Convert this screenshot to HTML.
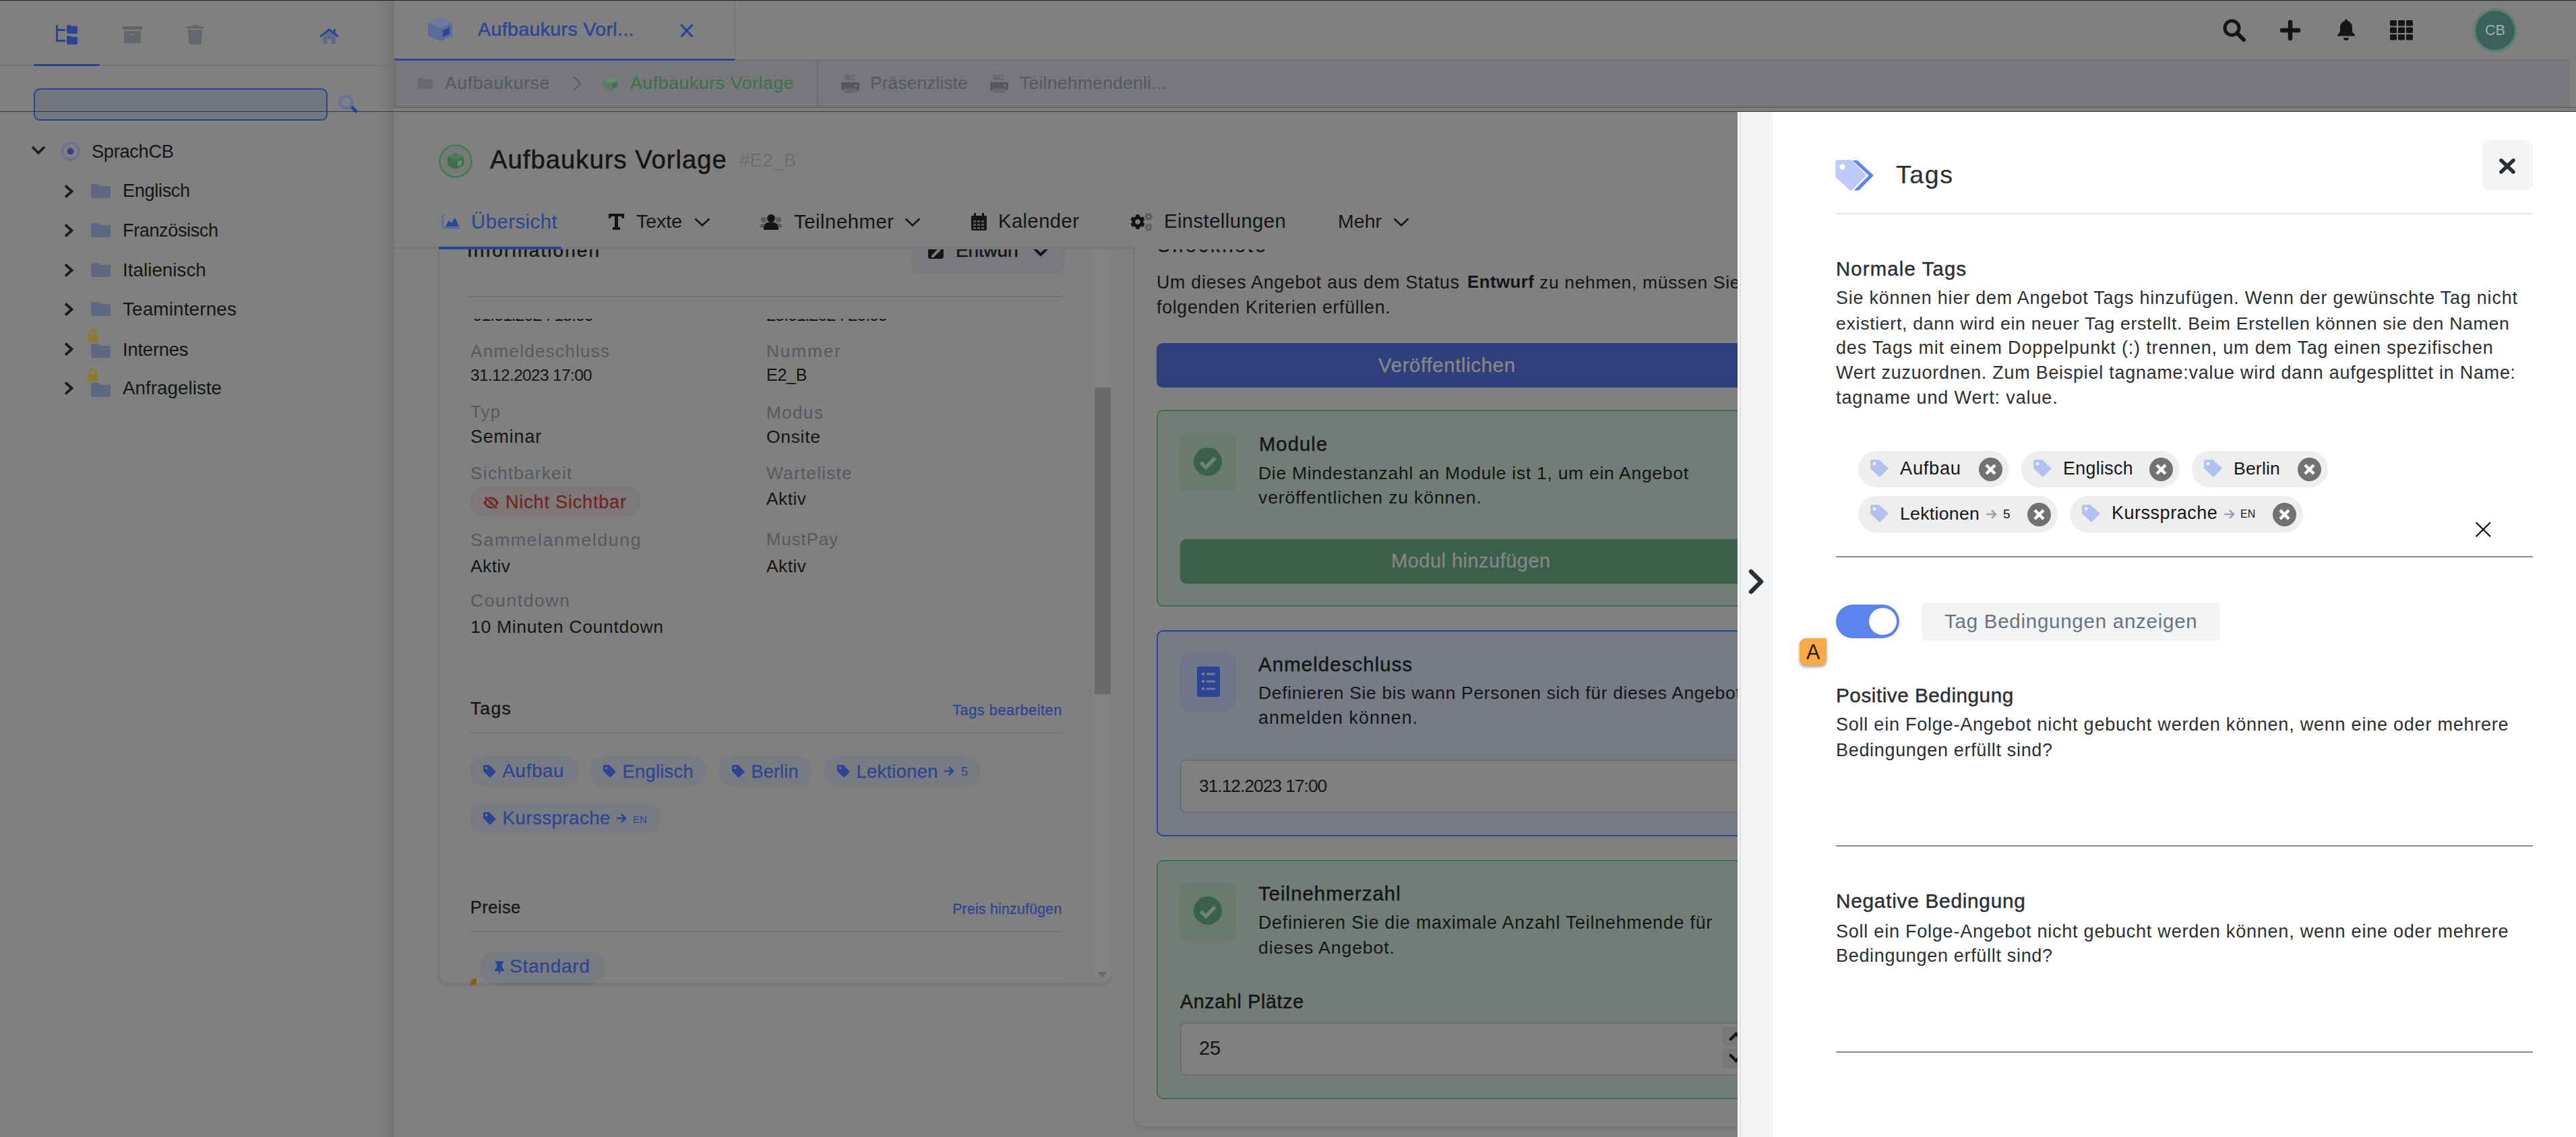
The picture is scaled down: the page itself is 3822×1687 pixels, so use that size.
<!DOCTYPE html><html><head><meta charset="utf-8"><style>
html,body{margin:0;padding:0;}
body{width:3822px;height:1687px;overflow:hidden;position:relative;background:#808080;font-family:"Liberation Sans",sans-serif;}
.a{position:absolute;}
.t{white-space:nowrap;line-height:1;}
svg{overflow:visible}
</style></head><body>
<div class="a" style="left:0px;top:0px;width:3822px;height:1px;background:#1e1e1e;"></div>
<div class="a" style="left:559px;top:1px;width:26px;height:1686px;background:linear-gradient(90deg,rgba(0,0,0,0),rgba(0,0,0,0.09))"></div>
<svg class="a" style="left:83px;top:36px;" width="33" height="31" viewBox="0 0 33 31"><rect x="0" y="1" width="3" height="25" rx="0.5" fill="#2d4494"/><rect x="0" y="7" width="14" height="3" fill="#2d4494"/><rect x="0" y="23" width="14" height="3" fill="#2d4494"/><path d="M16 3a2 2 0 0 1 2-2h3l1.5 1.5H30a2 2 0 0 1 2 2V12a2 2 0 0 1-2 2H18a2 2 0 0 1-2-2z" fill="#2d4494"/><path d="M16 19a2 2 0 0 1 2-2h3l1.5 1.5H30a2 2 0 0 1 2 2V28a2 2 0 0 1-2 2H18a2 2 0 0 1-2-2z" fill="#2d4494"/></svg>
<svg class="a" style="left:182px;top:39px;" width="29" height="25" viewBox="0 0 29 25"><rect x="0" y="0" width="29" height="5" rx="1" fill="#63666d"/><rect x="2" y="7" width="25" height="18" rx="1.5" fill="#63666d"/><rect x="11" y="11" width="7" height="1.8" fill="#7a7c80"/></svg>
<svg class="a" style="left:277px;top:37px;" width="25" height="30" viewBox="0 0 25 30"><rect x="0" y="2" width="25" height="3.5" fill="#63666d"/><path d="M8 2.5Q8 0 10.5 0h4Q17 0 17 2.5z" fill="#63666d"/><path d="M1.7 7.2h21.6l-1.7 18.8a3 3 0 0 1-3 3H6.4a3 3 0 0 1-3-3z" fill="#63666d"/></svg>
<svg class="a" style="left:474px;top:42px;" width="30" height="24" viewBox="0 0 30 24"><path d="M14.5 5L24 13v10H5.5V13z" fill="#5e6a8c"/><rect x="11.7" y="16.4" width="6" height="7" fill="#808080"/><path d="M1.2 12.4L14.4 2 27.6 12.4" stroke="#2d4494" stroke-width="3.2" fill="none"/><rect x="20.6" y="1.2" width="3.3" height="6" fill="#2d4494"/></svg>
<div class="a" style="left:0px;top:96px;width:581px;height:2px;background:#767676;"></div>
<div class="a" style="left:50px;top:95px;width:98px;height:3px;background:#2d4494;"></div>
<div class="a" style="left:50px;top:131px;width:436px;height:48px;background:#72767f;border:2px solid #2d4494;border-radius:9px;box-sizing:border-box"></div>
<svg class="a" style="left:500px;top:138px;" width="34" height="32" viewBox="0 0 34 32"><circle cx="13.4" cy="13.4" r="9" stroke="#66729c" stroke-width="4.5" fill="none"/><path d="M21.5 20.5l8 8" stroke="#2d4494" stroke-width="5"/></svg>
<svg class="a" style="left:46px;top:216px;" width="22" height="14" viewBox="0 0 22 14"><path d="M2 2l9 9 9-9" stroke="#1c1c1c" stroke-width="3.5" fill="none"/></svg>
<svg class="a" style="left:90px;top:210px;" width="29" height="29" viewBox="0 0 29 29"><circle cx="14.5" cy="14.5" r="12.5" stroke="#6d6f93" stroke-width="3.5" fill="none"/><circle cx="14.5" cy="14.5" r="5" fill="#3c3f88"/></svg>
<div class="a t" style="left:136.0px;top:210.8px;font-size:27.2px;color:#151515;letter-spacing:-0.29px;">SprachCB</div>
<svg class="a" style="left:95px;top:273.7px;" width="14" height="20" viewBox="0 0 14 20"><path d="M2 1.5l9.5 8.5-9.5 8.5" stroke="#1c1c1c" stroke-width="3.8" fill="none"/></svg>
<svg class="a" style="left:135px;top:272.7px;" width="29" height="21" viewBox="0 0 29 21"><path d="M0 3a3 3 0 0 1 3-3h8l3 3h12a3 3 0 0 1 3 3v12a3 3 0 0 1-3 3H3a3 3 0 0 1-3-3z" fill="#5f6882"/></svg>
<div class="a t" style="left:182.0px;top:270.1px;font-size:27.05px;color:#151515;letter-spacing:-0.30px;">Englisch</div>
<svg class="a" style="left:95px;top:332.3px;" width="14" height="20" viewBox="0 0 14 20"><path d="M2 1.5l9.5 8.5-9.5 8.5" stroke="#1c1c1c" stroke-width="3.8" fill="none"/></svg>
<svg class="a" style="left:135px;top:331.3px;" width="29" height="21" viewBox="0 0 29 21"><path d="M0 3a3 3 0 0 1 3-3h8l3 3h12a3 3 0 0 1 3 3v12a3 3 0 0 1-3 3H3a3 3 0 0 1-3-3z" fill="#5f6882"/></svg>
<div class="a t" style="left:182.0px;top:328.7px;font-size:26.99px;color:#151515;letter-spacing:-0.35px;">Französisch</div>
<svg class="a" style="left:95px;top:391.1px;" width="14" height="20" viewBox="0 0 14 20"><path d="M2 1.5l9.5 8.5-9.5 8.5" stroke="#1c1c1c" stroke-width="3.8" fill="none"/></svg>
<svg class="a" style="left:135px;top:390.1px;" width="29" height="21" viewBox="0 0 29 21"><path d="M0 3a3 3 0 0 1 3-3h8l3 3h12a3 3 0 0 1 3 3v12a3 3 0 0 1-3 3H3a3 3 0 0 1-3-3z" fill="#5f6882"/></svg>
<div class="a t" style="left:182.0px;top:387.1px;font-size:27.76px;color:#151515;letter-spacing:0.04px;">Italienisch</div>
<svg class="a" style="left:95px;top:449.1px;" width="14" height="20" viewBox="0 0 14 20"><path d="M2 1.5l9.5 8.5-9.5 8.5" stroke="#1c1c1c" stroke-width="3.8" fill="none"/></svg>
<svg class="a" style="left:135px;top:448.1px;" width="29" height="21" viewBox="0 0 29 21"><path d="M0 3a3 3 0 0 1 3-3h8l3 3h12a3 3 0 0 1 3 3v12a3 3 0 0 1-3 3H3a3 3 0 0 1-3-3z" fill="#5f6882"/></svg>
<div class="a t" style="left:182.0px;top:445.0px;font-size:27.89px;color:#151515;letter-spacing:0.14px;">Teaminternes</div>
<svg class="a" style="left:95px;top:508.29999999999995px;" width="14" height="20" viewBox="0 0 14 20"><path d="M2 1.5l9.5 8.5-9.5 8.5" stroke="#1c1c1c" stroke-width="3.8" fill="none"/></svg>
<svg class="a" style="left:135px;top:510.29999999999995px;" width="29" height="21" viewBox="0 0 29 21"><path d="M0 3a3 3 0 0 1 3-3h8l3 3h12a3 3 0 0 1 3 3v12a3 3 0 0 1-3 3H3a3 3 0 0 1-3-3z" fill="#5f6882"/></svg>
<svg class="a" style="left:129px;top:488.29999999999995px;" width="17" height="20" viewBox="0 0 17 20"><path d="M4 9V6a4.5 4.5 0 0 1 9 0v3" stroke="#8c7b2c" stroke-width="3" fill="none"/><rect x="1" y="9" width="15" height="11" rx="2" fill="#8c7b2c"/></svg>
<div class="a t" style="left:182.0px;top:504.5px;font-size:27.31px;color:#151515;letter-spacing:-0.16px;">Internes</div>
<svg class="a" style="left:95px;top:566.3px;" width="14" height="20" viewBox="0 0 14 20"><path d="M2 1.5l9.5 8.5-9.5 8.5" stroke="#1c1c1c" stroke-width="3.8" fill="none"/></svg>
<svg class="a" style="left:135px;top:568.3px;" width="29" height="21" viewBox="0 0 29 21"><path d="M0 3a3 3 0 0 1 3-3h8l3 3h12a3 3 0 0 1 3 3v12a3 3 0 0 1-3 3H3a3 3 0 0 1-3-3z" fill="#5f6882"/></svg>
<svg class="a" style="left:129px;top:546.3px;" width="17" height="20" viewBox="0 0 17 20"><path d="M4 9V6a4.5 4.5 0 0 1 9 0v3" stroke="#8c7b2c" stroke-width="3" fill="none"/><rect x="1" y="9" width="15" height="11" rx="2" fill="#8c7b2c"/></svg>
<div class="a t" style="left:182.0px;top:562.3px;font-size:27.73px;color:#151515;letter-spacing:0.06px;">Anfrageliste</div>
<div class="a" style="left:585px;top:88px;width:3227px;height:2px;background:#727272;"></div>
<div class="a" style="left:1090px;top:1px;width:1px;height:87px;background:#737373;"></div>
<div class="a" style="left:585px;top:87px;width:505px;height:4px;background:#2d4494;"></div>
<svg class="a" style="left:635px;top:26px;" width="36" height="35" viewBox="0 0 36 35"><path d="M18 0L36 8v19L18 35 0 27V8z" fill="#5b6a9c"/><path d="M18 0L36 8 18 16 0 8z" fill="#6e7aa3"/><path d="M22 19l10-4.5v10L22 29z" fill="#2d4494"/></svg>
<div class="a t" style="left:709.0px;top:29.1px;font-size:28.56px;color:#2d4494;letter-spacing:0.37px;-webkit-text-stroke:0.5px #2d4494">Aufbaukurs Vorl...</div>
<svg class="a" style="left:1009px;top:35px;" width="20" height="21" viewBox="0 0 20 21"><path d="M1.5 1.5l17 18M18.5 1.5l-17 18" stroke="#2d4494" stroke-width="3.2"/></svg>
<svg class="a" style="left:3298px;top:28px;" width="34" height="34" viewBox="0 0 34 34"><circle cx="13.5" cy="13.5" r="10.5" stroke="#151515" stroke-width="5" fill="none"/><path d="M21 21l10 10" stroke="#151515" stroke-width="6" stroke-linecap="round"/></svg>
<svg class="a" style="left:3383px;top:30px;" width="30" height="30" viewBox="0 0 30 30"><path d="M15 3v24M3 15h24" stroke="#151515" stroke-width="6.5" stroke-linecap="round"/></svg>
<svg class="a" style="left:3466px;top:28px;" width="30" height="34" viewBox="0 0 30 34"><path d="M15 3c-6 0-9 5-9 10v6l-4 5v1.5h26V24l-4-5v-6c0-5-3-10-9-10z" fill="#151515"/><circle cx="15" cy="2.5" r="2" fill="#151515"/><path d="M11 28a4 4 0 0 0 8 0z" fill="#151515"/></svg>
<svg class="a" style="left:3546px;top:30px;" width="34" height="30" viewBox="0 0 34 30"><rect x="0" y="0.0" width="10" height="8.5" rx="1.5" fill="#151515"/><rect x="12" y="0.0" width="10" height="8.5" rx="1.5" fill="#151515"/><rect x="24" y="0.0" width="10" height="8.5" rx="1.5" fill="#151515"/><rect x="0" y="10.5" width="10" height="8.5" rx="1.5" fill="#151515"/><rect x="12" y="10.5" width="10" height="8.5" rx="1.5" fill="#151515"/><rect x="24" y="10.5" width="10" height="8.5" rx="1.5" fill="#151515"/><rect x="0" y="21.0" width="10" height="8.5" rx="1.5" fill="#151515"/><rect x="12" y="21.0" width="10" height="8.5" rx="1.5" fill="#151515"/><rect x="24" y="21.0" width="10" height="8.5" rx="1.5" fill="#151515"/></svg>
<svg class="a" style="left:3669px;top:12px;" width="66" height="66" viewBox="0 0 66 66"><circle cx="33" cy="33" r="33" fill="#5f8076"/><circle cx="33" cy="33" r="29" fill="#3b6158"/></svg>
<div class="a t" style="left:3687.0px;top:33.6px;font-size:21.69px;color:#9db3ab;letter-spacing:-0.10px;">CB</div>
<div class="a" style="left:585px;top:90px;width:3227px;height:67px;background:#77787b;"></div>
<div class="a" style="left:585px;top:90px;width:2px;height:67px;background:#6f6f6f;"></div>
<div class="a" style="left:585px;top:157px;width:3227px;height:2px;background:#727272;"></div>
<div class="a" style="left:585px;top:159px;width:3237px;height:1px;background:#3e6b4c;"></div>
<div class="a" style="left:1212px;top:90px;width:2px;height:67px;background:#6c6c6c;"></div>
<svg class="a" style="left:620px;top:116px;" width="22" height="16" viewBox="0 0 22 16"><path d="M0 2a2 2 0 0 1 2-2h6l2 2h10a2 2 0 0 1 2 2v10a2 2 0 0 1-2 2H2a2 2 0 0 1-2-2z" fill="#67696e"/></svg>
<div class="a t" style="left:660.0px;top:110.4px;font-size:26.54px;color:#56585e;letter-spacing:0.62px;">Aufbaukurse</div>
<svg class="a" style="left:849px;top:113px;" width="14" height="22" viewBox="0 0 14 22"><path d="M2 1l10 10-10 10" stroke="#5a5c60" stroke-width="2" fill="none"/></svg>
<svg class="a" style="left:895px;top:113px;" width="22" height="22" viewBox="0 0 22 22"><path d="M11 0L22 5v12L11 22 0 17V5z" fill="#5f7a68"/><path d="M11 0L22 5 11 10 0 5z" fill="#6e8676"/><path d="M14 12l6-3v6l-6 3z" fill="#3e6b4c"/></svg>
<div class="a t" style="left:935.0px;top:110.3px;font-size:26.66px;color:#3d6e4c;letter-spacing:0.59px;">Aufbaukurs Vorlage</div>
<svg class="a" style="left:1248px;top:111px;" width="27" height="27" viewBox="0 0 27 27"><rect x="5" y="0" width="15" height="8" fill="#67696e"/><path d="M15 0l5 5h-5z" fill="#77787b"/><rect x="0" y="11" width="27" height="12" rx="2" fill="#56585e"/><rect x="4" y="20" width="19" height="7" rx="1.5" fill="#67696e"/><circle cx="22" cy="16" r="1.3" fill="#8a8b8e"/></svg>
<div class="a t" style="left:1291.0px;top:109.7px;font-size:26.37px;color:#56585e;letter-spacing:0.11px;">Präsenzliste</div>
<svg class="a" style="left:1469px;top:111px;" width="27" height="27" viewBox="0 0 27 27"><rect x="5" y="0" width="15" height="8" fill="#67696e"/><path d="M15 0l5 5h-5z" fill="#77787b"/><rect x="0" y="11" width="27" height="12" rx="2" fill="#56585e"/><rect x="4" y="20" width="19" height="7" rx="1.5" fill="#67696e"/><circle cx="22" cy="16" r="1.3" fill="#8a8b8e"/></svg>
<div class="a t" style="left:1513.0px;top:109.6px;font-size:26.58px;color:#56585e;letter-spacing:0.21px;">Teilnehmendenli...</div>
<div class="a" style="left:0px;top:165px;width:3822px;height:1px;background:#3a3a3a;"></div>
<svg class="a" style="left:651px;top:214px;" width="50" height="50" viewBox="0 0 50 50"><circle cx="25" cy="25" r="23.5" stroke="#3e7a52" stroke-width="2.5" fill="#757c78"/><path d="M25 13l12 5.5v13L25 37 13 31.5v-13z" fill="#3f6e4f"/><path d="M25 13l12 5.5-12 5.5-12-5.5z" fill="#4a7a5a"/><path d="M28 26l6-3v7l-6 3z" fill="#6f8a78"/></svg>
<div class="a t" style="left:727.0px;top:218.2px;font-size:38.3px;color:#151515;letter-spacing:0.98px;-webkit-text-stroke:0.5px #151515">Aufbaukurs Vorlage</div>
<div class="a t" style="left:1097.0px;top:225.3px;font-size:26.72px;color:#6b6e75;letter-spacing:0.95px;">#E2_B</div>
<svg class="a" style="left:655px;top:319px;" width="28" height="21" viewBox="0 0 28 21"><path d="M2 0v19h26" stroke="#5d6c9c" stroke-width="3" fill="none"/><path d="M6 17l5-9 4 4 5-8 6 13z" fill="#2d4494"/></svg>
<div class="a t" style="left:699.0px;top:314.0px;font-size:29.35px;color:#2d4494;letter-spacing:0.47px;">Übersicht</div>
<svg class="a" style="left:903px;top:317px;" width="23" height="24" viewBox="0 0 23 24"><path d="M0 0h23v7h-3l-1-3h-5v16h3v4H6v-4h3V4H4L3 7H0z" fill="#151515"/></svg>
<div class="a t" style="left:944.0px;top:314.4px;font-size:28.43px;color:#151515;letter-spacing:0.02px;">Texte</div>
<svg class="a" style="left:1030px;top:323px;" width="24" height="13" viewBox="0 0 24 13"><path d="M1.5 1.5l10.5 10 10.5-10" stroke="#151515" stroke-width="2.5" fill="none"/></svg>
<svg class="a" style="left:1127px;top:318px;" width="34" height="23" viewBox="0 0 34 23"><circle cx="17" cy="6" r="6" fill="#151515"/><path d="M6 23v-4a7 7 0 0 1 7-7h8a7 7 0 0 1 7 7v4z" fill="#151515"/><circle cx="6" cy="8" r="4" fill="#5a5a5a"/><circle cx="28" cy="8" r="4" fill="#5a5a5a"/><path d="M0 19a5 5 0 0 1 5-5h3l-2 6z" fill="#5a5a5a"/><path d="M34 19a5 5 0 0 0-5-5h-3l2 6z" fill="#5a5a5a"/></svg>
<div class="a t" style="left:1178.0px;top:314.0px;font-size:29.33px;color:#151515;letter-spacing:0.52px;">Teilnehmer</div>
<svg class="a" style="left:1342px;top:323px;" width="24" height="13" viewBox="0 0 24 13"><path d="M1.5 1.5l10.5 10 10.5-10" stroke="#151515" stroke-width="2.5" fill="none"/></svg>
<svg class="a" style="left:1441px;top:316px;" width="23" height="26" viewBox="0 0 23 26"><rect x="0" y="4" width="23" height="22" rx="2" fill="#151515"/><rect x="4" y="0" width="3" height="6" fill="#151515"/><rect x="16" y="0" width="3" height="6" fill="#151515"/><rect x="3" y="11" width="4" height="3" fill="#5a5a5a"/><rect x="3" y="16" width="4" height="3" fill="#5a5a5a"/><rect x="3" y="21" width="4" height="3" fill="#5a5a5a"/><rect x="9" y="11" width="4" height="3" fill="#5a5a5a"/><rect x="9" y="16" width="4" height="3" fill="#5a5a5a"/><rect x="9" y="21" width="4" height="3" fill="#5a5a5a"/><rect x="15" y="11" width="4" height="3" fill="#5a5a5a"/><rect x="15" y="16" width="4" height="3" fill="#5a5a5a"/><rect x="15" y="21" width="4" height="3" fill="#5a5a5a"/></svg>
<div class="a t" style="left:1481.0px;top:314.0px;font-size:29.18px;color:#151515;letter-spacing:0.44px;">Kalender</div>
<svg class="a" style="left:1670px;top:305px;" width="50" height="45" viewBox="0 0 50 45"><circle cx="18" cy="24.1" r="8.6" fill="#151515"/><rect x="15.2" y="13.3" width="5.6" height="21.6" rx="0.8" fill="#151515" transform="rotate(0 18 24.1)"/><rect x="15.2" y="13.3" width="5.6" height="21.6" rx="0.8" fill="#151515" transform="rotate(60 18 24.1)"/><rect x="15.2" y="13.3" width="5.6" height="21.6" rx="0.8" fill="#151515" transform="rotate(120 18 24.1)"/><circle cx="18" cy="24.1" r="3.7" fill="#808080"/><circle cx="34.2" cy="16.4" r="4.3" fill="#5a5c5c"/><rect x="32.6" y="10.799999999999999" width="3.2" height="11.2" rx="0.8" fill="#5a5c5c" transform="rotate(30 34.2 16.4)"/><rect x="32.6" y="10.799999999999999" width="3.2" height="11.2" rx="0.8" fill="#5a5c5c" transform="rotate(90 34.2 16.4)"/><rect x="32.6" y="10.799999999999999" width="3.2" height="11.2" rx="0.8" fill="#5a5c5c" transform="rotate(150 34.2 16.4)"/><circle cx="34.2" cy="16.4" r="1.9" fill="#808080"/><circle cx="34.2" cy="32.1" r="4.3" fill="#5a5c5c"/><rect x="32.6" y="26.5" width="3.2" height="11.2" rx="0.8" fill="#5a5c5c" transform="rotate(30 34.2 32.1)"/><rect x="32.6" y="26.5" width="3.2" height="11.2" rx="0.8" fill="#5a5c5c" transform="rotate(90 34.2 32.1)"/><rect x="32.6" y="26.5" width="3.2" height="11.2" rx="0.8" fill="#5a5c5c" transform="rotate(150 34.2 32.1)"/><circle cx="34.2" cy="32.1" r="1.9" fill="#808080"/></svg>
<div class="a t" style="left:1727.0px;top:314.0px;font-size:29.27px;color:#151515;letter-spacing:0.42px;">Einstellungen</div>
<div class="a t" style="left:1985.0px;top:314.4px;font-size:28.45px;color:#151515;letter-spacing:0.10px;">Mehr</div>
<svg class="a" style="left:2067px;top:323px;" width="24" height="13" viewBox="0 0 24 13"><path d="M1.5 1.5l10.5 10 10.5-10" stroke="#151515" stroke-width="2.5" fill="none"/></svg>
<div class="a" style="left:650px;top:366px;width:999px;height:1095px;background:#808080;border:2px solid #777;border-top:none;border-radius:0 0 15px 15px;box-sizing:border-box;box-shadow:0 2px 4px rgba(0,0,0,0.08)"></div>
<div class="a" style="left:1622px;top:372px;width:27px;height:1074px;background:#838383;"></div>
<div class="a" style="left:1624px;top:575px;width:24px;height:455px;background:#6a6a6a;"></div>
<svg class="a" style="left:1628px;top:1442px;" width="15" height="8" viewBox="0 0 15 8"><path d="M0 0h15L7.5 8z" fill="#6a6a6a"/></svg>
<div class="a" style="left:650px;top:370px;width:999px;height:97px;overflow:hidden">
<div class="a t" style="left:43.0px;top:-11.7px;font-size:28px;color:#151515;letter-spacing:2.07px;-webkit-text-stroke:0.5px #151515">Informationen</div>
<div class="a" style="left:702px;top:-40px;width:228px;height:76px;background:#797a7d;border-radius:12px"></div>
<svg class="a" style="left:727px;top:-2px;" width="23" height="17" viewBox="0 0 23 17"><path d="M0 -6h23v18a4 4 0 0 1-4 4H4a4 4 0 0 1-4-4z" fill="#151515"/><path d="M5 11l11-11 3 3-11 11H5z" fill="#797a7d"/></svg>
<div class="a t" style="left:768.0px;top:-11.7px;font-size:28px;color:#151515;letter-spacing:-0.17px;-webkit-text-stroke:0.5px #151515">Entwurf</div>
<svg class="a" style="left:883px;top:0px;" width="22" height="11" viewBox="0 0 22 11"><path d="M2 -1l9 9 9-9" stroke="#151515" stroke-width="4" fill="none"/></svg>
<div class="a" style="left:43px;top:69px;width:887px;height:2px;background:#737373;"></div>
</div>
<div class="a" style="left:650px;top:473px;width:999px;height:8px;overflow:hidden">
<div class="a t" style="left:51.0px;top:-19.5px;font-size:26px;color:#151515;letter-spacing:-1.49px;">01.01.2024 15:00</div>
<div class="a t" style="left:487.0px;top:-19.5px;font-size:26px;color:#151515;letter-spacing:-1.49px;">25.01.2024 20:00</div>
</div>
<div class="a" style="left:585px;top:366px;width:1993px;height:4px;background:#7a7a7a;"></div>
<div class="a" style="left:651px;top:366px;width:182px;height:4px;background:#2d4494;"></div>
<div class="a t" style="left:698.0px;top:508.1px;font-size:26.12px;color:#56595f;letter-spacing:1.23px;">Anmeldeschluss</div>
<div class="a t" style="left:1137.0px;top:508.0px;font-size:26.33px;color:#56595f;letter-spacing:1.84px;">Nummer</div>
<div class="a t" style="left:698.0px;top:544.5px;font-size:24.36px;color:#151515;letter-spacing:-0.60px;">31.12.2023 17:00</div>
<div class="a t" style="left:1137.0px;top:544.1px;font-size:25.11px;color:#151515;letter-spacing:-0.30px;">E2_B</div>
<div class="a t" style="left:698.0px;top:598.7px;font-size:25.62px;color:#56595f;letter-spacing:1.35px;">Typ</div>
<div class="a t" style="left:1137.0px;top:598.6px;font-size:25.98px;color:#56595f;letter-spacing:1.50px;">Modus</div>
<div class="a t" style="left:698.0px;top:635.2px;font-size:26.83px;color:#151515;letter-spacing:0.87px;">Seminar</div>
<div class="a t" style="left:1137.0px;top:635.4px;font-size:26.58px;color:#151515;letter-spacing:0.62px;">Onsite</div>
<div class="a t" style="left:698.0px;top:689.0px;font-size:26.33px;color:#56595f;letter-spacing:1.15px;">Sichtbarkeit</div>
<div class="a t" style="left:1137.0px;top:689.0px;font-size:26.33px;color:#56595f;letter-spacing:1.18px;">Warteliste</div>
<div class="a" style="left:697px;top:722px;width:254px;height:45px;background:#7e7979;border-radius:23px"></div>
<svg class="a" style="left:717px;top:737px;" width="23" height="18" viewBox="0 0 23 18"><path d="M2 9c3-5 6-7 9.5-7s6.5 2 9.5 7c-3 5-6 7-9.5 7S5 14 2 9z" stroke="#742323" stroke-width="3" fill="none"/><circle cx="11.5" cy="9" r="3.5" fill="#742323"/><path d="M3 1l17 16" stroke="#7e7979" stroke-width="5"/><path d="M3 1l17 16" stroke="#742323" stroke-width="2.8"/></svg>
<div class="a t" style="left:750.0px;top:731.1px;font-size:27.12px;color:#742323;letter-spacing:0.79px;-webkit-text-stroke:0.3px #742323">Nicht Sichtbar</div>
<div class="a t" style="left:1137.0px;top:726.5px;font-size:26.36px;color:#151515;letter-spacing:0.45px;">Aktiv</div>
<div class="a t" style="left:698.0px;top:787.8px;font-size:26.66px;color:#56595f;letter-spacing:1.64px;">Sammelanmeldung</div>
<div class="a t" style="left:1137.0px;top:788.3px;font-size:25.6px;color:#56595f;letter-spacing:1.07px;">MustPay</div>
<div class="a t" style="left:698.0px;top:826.5px;font-size:26.36px;color:#151515;letter-spacing:0.45px;">Aktiv</div>
<div class="a t" style="left:1137.0px;top:826.5px;font-size:26.36px;color:#151515;letter-spacing:0.45px;">Aktiv</div>
<div class="a t" style="left:698.0px;top:877.9px;font-size:26.51px;color:#56595f;letter-spacing:1.61px;">Countdown</div>
<div class="a t" style="left:698.0px;top:917.3px;font-size:26.64px;color:#151515;letter-spacing:0.65px;">10 Minuten Countdown</div>
<div class="a t" style="left:697.8px;top:1038.0px;font-size:26.6px;color:#151515;letter-spacing:1.27px;-webkit-text-stroke:0.3px #151515">Tags</div>
<div class="a t" style="left:1413.2px;top:1042.9px;font-size:21.72px;color:#2d4494;letter-spacing:0.54px;-webkit-text-stroke:0.3px #2d4494">Tags bearbeiten</div>
<div class="a" style="left:697px;top:1086px;width:879px;height:2px;background:#737373;"></div>
<div class="a" style="left:697px;top:1122px;width:162px;height:45px;background:#787b82;border-radius:23px"></div>
<svg class="a" style="left:717px;top:1135px;" width="19" height="19" viewBox="0 0 19 19"><path d="M0 1.5A1.5 1.5 0 0 1 1.5 0H9l10 10-9 9L0 9z" fill="#2d4494"/><circle cx="4.5" cy="4.5" r="1.8" fill="#787b82"/></svg>
<div class="a t" style="left:745.5px;top:1130.2px;font-size:27.79px;color:#2d4494;letter-spacing:0.58px;-webkit-text-stroke:0.25px #2d4494">Aufbau</div>
<div class="a" style="left:875px;top:1122px;width:173px;height:45px;background:#787b82;border-radius:23px"></div>
<svg class="a" style="left:895px;top:1135px;" width="19" height="19" viewBox="0 0 19 19"><path d="M0 1.5A1.5 1.5 0 0 1 1.5 0H9l10 10-9 9L0 9z" fill="#2d4494"/><circle cx="4.5" cy="4.5" r="1.8" fill="#787b82"/></svg>
<div class="a t" style="left:923.5px;top:1130.5px;font-size:27.33px;color:#2d4494;letter-spacing:0.26px;-webkit-text-stroke:0.25px #2d4494">Englisch</div>
<div class="a" style="left:1066px;top:1122px;width:139px;height:45px;background:#787b82;border-radius:23px"></div>
<svg class="a" style="left:1086px;top:1135px;" width="19" height="19" viewBox="0 0 19 19"><path d="M0 1.5A1.5 1.5 0 0 1 1.5 0H9l10 10-9 9L0 9z" fill="#2d4494"/><circle cx="4.5" cy="4.5" r="1.8" fill="#787b82"/></svg>
<div class="a t" style="left:1114.5px;top:1130.6px;font-size:27.12px;color:#2d4494;letter-spacing:0.14px;-webkit-text-stroke:0.25px #2d4494">Berlin</div>
<div class="a" style="left:1222px;top:1122px;width:233px;height:45px;background:#787b82;border-radius:23px"></div>
<svg class="a" style="left:1242px;top:1135px;" width="19" height="19" viewBox="0 0 19 19"><path d="M0 1.5A1.5 1.5 0 0 1 1.5 0H9l10 10-9 9L0 9z" fill="#2d4494"/><circle cx="4.5" cy="4.5" r="1.8" fill="#787b82"/></svg>
<div class="a t" style="left:1270.5px;top:1130.5px;font-size:27.38px;color:#2d4494;letter-spacing:0.28px;-webkit-text-stroke:0.25px #2d4494">Lektionen</div>
<svg class="a" style="left:1400px;top:1136px;" width="16" height="16" viewBox="0 0 16 16"><path d="M1 8h13M8 2l6 6-6 6" stroke="#2d4494" stroke-width="2.6" fill="none"/></svg>
<div class="a t" style="left:1426.0px;top:1136.1px;font-size:18.17px;color:#2d4494;letter-spacing:0.00px;">5</div>
<div class="a" style="left:697px;top:1192px;width:284px;height:45px;background:#787b82;border-radius:23px"></div>
<svg class="a" style="left:717px;top:1205px;" width="19" height="19" viewBox="0 0 19 19"><path d="M0 1.5A1.5 1.5 0 0 1 1.5 0H9l10 10-9 9L0 9z" fill="#2d4494"/><circle cx="4.5" cy="4.5" r="1.8" fill="#787b82"/></svg>
<div class="a t" style="left:745.5px;top:1200.3px;font-size:27.69px;color:#2d4494;letter-spacing:0.45px;-webkit-text-stroke:0.25px #2d4494">Kurssprache</div>
<svg class="a" style="left:914px;top:1206px;" width="16" height="16" viewBox="0 0 16 16"><path d="M1 8h13M8 2l6 6-6 6" stroke="#2d4494" stroke-width="2.6" fill="none"/></svg>
<div class="a t" style="left:939.0px;top:1207.7px;font-size:15px;color:#2d4494;letter-spacing:0.00px;">EN</div>
<div class="a t" style="left:697.8px;top:1333.5px;font-size:25.5px;color:#151515;letter-spacing:0.44px;-webkit-text-stroke:0.3px #151515">Preise</div>
<div class="a t" style="left:1413.2px;top:1338.1px;font-size:21.21px;color:#2d4494;letter-spacing:0.27px;-webkit-text-stroke:0.3px #2d4494">Preis hinzufügen</div>
<div class="a" style="left:697px;top:1381px;width:879px;height:2px;background:#737373;"></div>
<div class="a" style="left:706px;top:1451px;width:870px;height:2px;background:#868686;"></div>
<div class="a" style="left:713px;top:1413px;width:184px;height:46px;background:#787b82;border-radius:23px;box-shadow:0 1px 3px rgba(0,0,0,0.12)"></div>
<svg class="a" style="left:733px;top:1426px;" width="16" height="19" viewBox="0 0 16 19"><path d="M2 0h12v2l-2 2v5l3 4v2H9v4H7v-4H1v-2l3-4V4L2 2z" fill="#2d4494"/></svg>
<div class="a t" style="left:756.0px;top:1420.1px;font-size:28.1px;color:#2d4494;letter-spacing:0.71px;-webkit-text-stroke:0.25px #2d4494">Standard</div>
<div class="a" style="left:697px;top:1451px;width:10px;height:10px;overflow:hidden"><div style="width:20px;height:20px;border-radius:10px;background:#7d661c"></div></div>
<div class="a" style="left:1682px;top:366px;width:1000px;height:1307px;background:#808080;border:2px solid #777;border-top:none;border-radius:0 0 15px 15px;box-sizing:border-box;box-shadow:0 2px 4px rgba(0,0,0,0.08)"></div>
<div class="a" style="left:1682px;top:370px;width:300px;height:10px;overflow:hidden">
<div class="a t" style="left:34.0px;top:-18.7px;font-size:28px;color:#151515;letter-spacing:3.64px;-webkit-text-stroke:0.5px #151515">Checkliste</div>
</div>
<div class="a t" style="left:1716.0px;top:405.9px;font-size:26.75px;color:#151515;letter-spacing:0.77px;">Um dieses Angebot aus dem Status</div>
<div class="a t" style="left:2177.0px;top:406.3px;font-size:25.87px;color:#151515;letter-spacing:0.42px;font-weight:700;">Entwurf</div>
<div class="a t" style="left:2284.0px;top:406.0px;font-size:26.44px;color:#151515;letter-spacing:0.69px;">zu nehmen, müssen Sie</div>
<div class="a t" style="left:1716.0px;top:443.4px;font-size:26.78px;color:#151515;letter-spacing:0.69px;">folgenden Kriterien erfüllen.</div>
<div class="a" style="left:1716px;top:509px;width:900px;height:66px;background:#2f3f7b;border-radius:9px"></div>
<div class="a t" style="left:2045.0px;top:526.7px;font-size:29.34px;color:#888888;letter-spacing:0.69px;-webkit-text-stroke:0.3px #888888">Veröffentlichen</div>
<div class="a" style="left:1716px;top:608px;width:900px;height:292px;background:#727d78;border:2px solid #3b6e4c;border-radius:10px;box-sizing:border-box"></div>
<div class="a" style="left:1751px;top:644px;width:83px;height:85px;background:#6a7a71;border-radius:10px"></div>
<svg class="a" style="left:1771px;top:664px;" width="42" height="42" viewBox="0 0 42 42"><circle cx="21" cy="21" r="21" fill="#3a5f4a"/><path d="M10.5 22l7.5 7.5 14-14" stroke="#6f8277" stroke-width="5.5" fill="none"/></svg>
<div class="a t" style="left:1868.0px;top:644.8px;font-size:29.12px;color:#151515;letter-spacing:1.12px;-webkit-text-stroke:0.45px #151515">Module</div>
<div class="a t" style="left:1867.0px;top:688.6px;font-size:26.5px;color:#151515;letter-spacing:0.71px;">Die Mindestanzahl an Module ist 1, um ein Angebot</div>
<div class="a t" style="left:1867.0px;top:725.1px;font-size:26.7px;color:#151515;letter-spacing:0.79px;">veröffentlichen zu können.</div>
<div class="a" style="left:1751px;top:800px;width:860px;height:66px;background:#3a5f4a;border-radius:9px"></div>
<div class="a t" style="left:2064.0px;top:817.6px;font-size:29.14px;color:#868686;letter-spacing:0.42px;-webkit-text-stroke:0.3px #868686">Modul hinzufügen</div>
<div class="a" style="left:1716px;top:935px;width:900px;height:306px;background:#777b85;border:2px solid #2d4494;border-radius:10px;box-sizing:border-box"></div>
<div class="a" style="left:1751px;top:969px;width:83px;height:86px;background:#70768a;border-radius:10px"></div>
<svg class="a" style="left:1776px;top:989px;" width="34" height="45" viewBox="0 0 34 45"><rect x="0" y="0" width="34" height="45" rx="3" fill="#2d4494"/><circle cx="9" cy="11" r="2.3" fill="#777b8a"/><rect x="14" y="9.5" width="13" height="3" rx="1" fill="#777b8a"/><circle cx="9" cy="22" r="2.3" fill="#777b8a"/><rect x="14" y="20.5" width="13" height="3" rx="1" fill="#777b8a"/><circle cx="9" cy="33" r="2.3" fill="#777b8a"/><rect x="14" y="31.5" width="13" height="3" rx="1" fill="#777b8a"/></svg>
<div class="a t" style="left:1867.0px;top:971.0px;font-size:29.33px;color:#151515;letter-spacing:1.13px;-webkit-text-stroke:0.45px #151515">Anmeldeschluss</div>
<div class="a t" style="left:1867.0px;top:1015.1px;font-size:26.46px;color:#151515;letter-spacing:0.66px;">Definieren Sie bis wann Personen sich für dieses Angebot</div>
<div class="a t" style="left:1867.0px;top:1051.6px;font-size:26.84px;color:#151515;letter-spacing:1.03px;">anmelden können.</div>
<div class="a" style="left:1751px;top:1127px;width:860px;height:79px;background:#808080;border:2px solid #6e6e6e;border-radius:8px;box-sizing:border-box"></div>
<div class="a t" style="left:1779.0px;top:1152.8px;font-size:26.35px;color:#151515;letter-spacing:-0.99px;">31.12.2023 17:00</div>
<div class="a" style="left:1716px;top:1276px;width:900px;height:355px;background:#727d78;border:2px solid #3b6e4c;border-radius:10px;box-sizing:border-box"></div>
<div class="a" style="left:1751px;top:1310px;width:83px;height:85px;background:#6a7a71;border-radius:10px"></div>
<svg class="a" style="left:1771px;top:1330px;" width="42" height="42" viewBox="0 0 42 42"><circle cx="21" cy="21" r="21" fill="#3a5f4a"/><path d="M10.5 22l7.5 7.5 14-14" stroke="#6f8277" stroke-width="5.5" fill="none"/></svg>
<div class="a t" style="left:1867.0px;top:1311.0px;font-size:29.36px;color:#151515;letter-spacing:1.02px;-webkit-text-stroke:0.45px #151515">Teilnehmerzahl</div>
<div class="a t" style="left:1867.0px;top:1355.8px;font-size:26.72px;color:#151515;letter-spacing:0.82px;">Definieren Sie die maximale Anzahl Teilnehmende für</div>
<div class="a t" style="left:1867.0px;top:1392.6px;font-size:26.69px;color:#151515;letter-spacing:0.86px;">dieses Angebot.</div>
<div class="a t" style="left:1751.0px;top:1471.7px;font-size:28.64px;color:#151515;letter-spacing:0.67px;-webkit-text-stroke:0.45px #151515">Anzahl Plätze</div>
<div class="a" style="left:1751px;top:1517px;width:860px;height:79px;background:#808080;border:2px solid #6e6e6e;border-radius:8px;box-sizing:border-box"></div>
<div class="a t" style="left:1779.0px;top:1540.6px;font-size:28.92px;color:#151515;letter-spacing:0.00px;">25</div>
<div class="a" style="left:2555px;top:1524px;width:30px;height:28px;background:#787878;border-radius:7px"></div>
<div class="a" style="left:2555px;top:1556px;width:30px;height:29px;background:#787878;border-radius:7px"></div>
<svg class="a" style="left:2560px;top:1525px;" width="30" height="60" viewBox="0 0 30 60"><path d="M7.6 17l8.2-8.1 8.2 8.1M7.6 40.8l8.2 8.2 8.2-8.2" stroke="#151515" stroke-width="4.2" fill="none" stroke-linecap="round"/></svg>
<div class="a" style="left:2578px;top:166px;width:1244px;height:1521px;background:#ffffff;"></div>
<div class="a" style="left:2578px;top:166px;width:3px;height:1521px;background:#f8f9fb;"></div>
<div class="a" style="left:2581px;top:166px;width:2px;height:1521px;background:#dedede;"></div>
<div class="a" style="left:2583px;top:166px;width:47px;height:1521px;background:#f3f4f6;"></div>
<svg class="a" style="left:2594px;top:844px;" width="24" height="38" viewBox="0 0 24 38"><path d="M4 4l15 15L4 34" stroke="#2b2f33" stroke-width="6.5" stroke-linecap="round" stroke-linejoin="round" fill="none"/></svg>
<svg class="a" style="left:2724px;top:238px;" width="56" height="45" viewBox="0 0 56 45"><path d="M0 3Q0 0 3 0H23L44.6 22.3 22.3 44.4 0 24.6z" fill="#bccbf7" stroke="#bccbf7" stroke-width="1.5" stroke-linejoin="round"/><circle cx="9.5" cy="9.4" r="4" fill="#fff"/><path d="M26 0.5h5.5L55 22.3 33.5 44h-5.5L49.5 22.3z" fill="#5b84f0" stroke="#5b84f0" stroke-width="1.2" stroke-linejoin="round"/></svg>
<div class="a t" style="left:2813.0px;top:241.3px;font-size:37.59px;color:#2b2f33;letter-spacing:1.53px;-webkit-text-stroke:0.2px #2b2f33">Tags</div>
<div class="a" style="left:3683px;top:208px;width:75px;height:74px;background:#f3f4f6;border-radius:9px"></div>
<svg class="a" style="left:3708px;top:235px;" width="24" height="23" viewBox="0 0 24 23"><path d="M3 3l18 17M21 3L3 20" stroke="#2b2f33" stroke-width="5.5" stroke-linecap="round"/></svg>
<div class="a" style="left:2724px;top:316px;width:1034px;height:2px;background:#e5e5e5;"></div>
<div class="a t" style="left:2724.0px;top:384.8px;font-size:29.22px;color:#2b2f33;letter-spacing:1.22px;-webkit-text-stroke:0.45px #2b2f33">Normale Tags</div>
<div class="a t" style="left:2724.0px;top:429.4px;font-size:26.89px;color:#2b2f33;letter-spacing:0.81px;">Sie können hier dem Angebot Tags hinzufügen. Wenn der gewünschte Tag nicht</div>
<div class="a t" style="left:2724.0px;top:466.5px;font-size:26.69px;color:#2b2f33;letter-spacing:0.67px;">existiert, dann wird ein neuer Tag erstellt. Beim Erstellen können sie den Namen</div>
<div class="a t" style="left:2724.0px;top:503.4px;font-size:26.98px;color:#2b2f33;letter-spacing:0.83px;">des Tags mit einem Doppelpunkt (:) trennen, um dem Tag einen spezifischen</div>
<div class="a t" style="left:2724.0px;top:540.4px;font-size:26.88px;color:#2b2f33;letter-spacing:0.78px;">Wert zuzuordnen. Zum Beispiel tagname:value wird dann aufgesplittet in Name:</div>
<div class="a t" style="left:2724.0px;top:577.3px;font-size:26.99px;color:#2b2f33;letter-spacing:0.88px;">tagname und Wert: value.</div>
<div class="a" style="left:2757px;top:669px;width:224px;height:54px;background:#eeeeee;border-radius:27px"></div>
<svg class="a" style="left:2775px;top:682px;" width="27" height="26" viewBox="0 0 27 26"><path d="M0 2.5A2.5 2.5 0 0 1 2.5 0H13l14 13-13 13L0 13z" fill="#b1c2f0"/><circle cx="6" cy="6" r="2.5" fill="#eeeeee"/></svg>
<div class="a t" style="left:2819.0px;top:681.3px;font-size:27.27px;color:#161616;letter-spacing:0.70px;">Aufbau</div>
<svg class="a" style="left:2936px;top:679px;" width="35" height="35" viewBox="0 0 35 35"><circle cx="17.5" cy="17.5" r="17.5" fill="#727272"/><path d="M11 11l13 13M24 11L11 24" stroke="#fff" stroke-width="4.5"/></svg>
<div class="a" style="left:2999px;top:669px;width:235px;height:54px;background:#eeeeee;border-radius:27px"></div>
<svg class="a" style="left:3017px;top:682px;" width="27" height="26" viewBox="0 0 27 26"><path d="M0 2.5A2.5 2.5 0 0 1 2.5 0H13l14 13-13 13L0 13z" fill="#b1c2f0"/><circle cx="6" cy="6" r="2.5" fill="#eeeeee"/></svg>
<div class="a t" style="left:3061.0px;top:681.5px;font-size:26.74px;color:#161616;letter-spacing:0.36px;">Englisch</div>
<svg class="a" style="left:3189px;top:679px;" width="35" height="35" viewBox="0 0 35 35"><circle cx="17.5" cy="17.5" r="17.5" fill="#727272"/><path d="M11 11l13 13M24 11L11 24" stroke="#fff" stroke-width="4.5"/></svg>
<div class="a" style="left:3252px;top:669px;width:202px;height:54px;background:#eeeeee;border-radius:27px"></div>
<svg class="a" style="left:3270px;top:682px;" width="27" height="26" viewBox="0 0 27 26"><path d="M0 2.5A2.5 2.5 0 0 1 2.5 0H13l14 13-13 13L0 13z" fill="#b1c2f0"/><circle cx="6" cy="6" r="2.5" fill="#eeeeee"/></svg>
<div class="a t" style="left:3314.0px;top:681.6px;font-size:26.55px;color:#161616;letter-spacing:0.20px;">Berlin</div>
<svg class="a" style="left:3409px;top:679px;" width="35" height="35" viewBox="0 0 35 35"><circle cx="17.5" cy="17.5" r="17.5" fill="#727272"/><path d="M11 11l13 13M24 11L11 24" stroke="#fff" stroke-width="4.5"/></svg>
<div class="a" style="left:2757px;top:736px;width:296px;height:54px;background:#eeeeee;border-radius:27px"></div>
<svg class="a" style="left:2775px;top:749px;" width="27" height="26" viewBox="0 0 27 26"><path d="M0 2.5A2.5 2.5 0 0 1 2.5 0H13l14 13-13 13L0 13z" fill="#b1c2f0"/><circle cx="6" cy="6" r="2.5" fill="#eeeeee"/></svg>
<div class="a t" style="left:2819.0px;top:748.6px;font-size:26.67px;color:#161616;letter-spacing:0.28px;">Lektionen</div>
<svg class="a" style="left:2946px;top:755px;" width="17" height="16" viewBox="0 0 17 16"><path d="M1 8h14M9 2l6 6-6 6" stroke="#9ba4b5" stroke-width="2.6" fill="none"/></svg>
<div class="a t" style="left:2972.0px;top:753.5px;font-size:18.9px;color:#161616;letter-spacing:0.00px;">5</div>
<svg class="a" style="left:3008px;top:746px;" width="35" height="35" viewBox="0 0 35 35"><circle cx="17.5" cy="17.5" r="17.5" fill="#727272"/><path d="M11 11l13 13M24 11L11 24" stroke="#fff" stroke-width="4.5"/></svg>
<div class="a" style="left:3071px;top:736px;width:346px;height:54px;background:#eeeeee;border-radius:27px"></div>
<svg class="a" style="left:3089px;top:749px;" width="27" height="26" viewBox="0 0 27 26"><path d="M0 2.5A2.5 2.5 0 0 1 2.5 0H13l14 13-13 13L0 13z" fill="#b1c2f0"/><circle cx="6" cy="6" r="2.5" fill="#eeeeee"/></svg>
<div class="a t" style="left:3133.0px;top:748.4px;font-size:27.02px;color:#161616;letter-spacing:0.51px;">Kurssprache</div>
<svg class="a" style="left:3299px;top:755px;" width="17" height="16" viewBox="0 0 17 16"><path d="M1 8h14M9 2l6 6-6 6" stroke="#9ba4b5" stroke-width="2.6" fill="none"/></svg>
<div class="a t" style="left:3324.0px;top:754.9px;font-size:16px;color:#161616;letter-spacing:0.00px;">EN</div>
<svg class="a" style="left:3372px;top:746px;" width="35" height="35" viewBox="0 0 35 35"><circle cx="17.5" cy="17.5" r="17.5" fill="#727272"/><path d="M11 11l13 13M24 11L11 24" stroke="#fff" stroke-width="4.5"/></svg>
<svg class="a" style="left:3673px;top:775px;" width="24" height="23" viewBox="0 0 24 23"><path d="M1.3 0.8l20.1 19.7M21.4 0.8l-20.1 19.7" stroke="#111" stroke-width="2.3" stroke-linecap="round"/></svg>
<div class="a" style="left:2724px;top:825px;width:1034px;height:2px;background:#8a8a8a;"></div>
<div class="a" style="left:2724px;top:897px;width:94px;height:50px;background:#5b84ee;border-radius:25px"></div>
<div class="a" style="left:2773px;top:902px;width:41px;height:40px;background:#ffffff;border-radius:50%"></div>
<div class="a" style="left:2851px;top:894px;width:443px;height:57px;background:#f3f4f6;border-radius:6px"></div>
<div class="a t" style="left:2885.0px;top:906.5px;font-size:29.47px;color:#6b7280;letter-spacing:0.76px;">Tag Bedingungen anzeigen</div>
<div class="a" style="left:2670px;top:947px;width:40px;height:40px;background:#f7aa45;border-radius:9px 0 9px 9px;box-shadow:0 3px 4px rgba(0,0,0,0.35);"></div>
<div class="a t" style="left:2680.0px;top:952.1px;font-size:30.52px;color:#2a1a05;letter-spacing:0.00px;">A</div>
<div class="a t" style="left:2724.0px;top:1017.4px;font-size:29.74px;color:#2b2f33;letter-spacing:0.51px;-webkit-text-stroke:0.45px #2b2f33">Positive Bedingung</div>
<div class="a t" style="left:2724.0px;top:1061.4px;font-size:27.1px;color:#2b2f33;letter-spacing:0.73px;">Soll ein Folge-Angebot nicht gebucht werden können, wenn eine oder mehrere</div>
<div class="a t" style="left:2724.0px;top:1099.5px;font-size:27.0px;color:#2b2f33;letter-spacing:0.68px;">Bedingungen erfüllt sind?</div>
<div class="a" style="left:2724px;top:1254px;width:1034px;height:2px;background:#8a8a8a;"></div>
<div class="a t" style="left:2724.0px;top:1322.4px;font-size:29.79px;color:#2b2f33;letter-spacing:0.74px;-webkit-text-stroke:0.45px #2b2f33">Negative Bedingung</div>
<div class="a t" style="left:2724.0px;top:1367.8px;font-size:27.1px;color:#2b2f33;letter-spacing:0.73px;">Soll ein Folge-Angebot nicht gebucht werden können, wenn eine oder mehrere</div>
<div class="a t" style="left:2724.0px;top:1405.2px;font-size:27.0px;color:#2b2f33;letter-spacing:0.68px;">Bedingungen erfüllt sind?</div>
<div class="a" style="left:2724px;top:1560px;width:1034px;height:2px;background:#8a8a8a;"></div>
</body></html>
